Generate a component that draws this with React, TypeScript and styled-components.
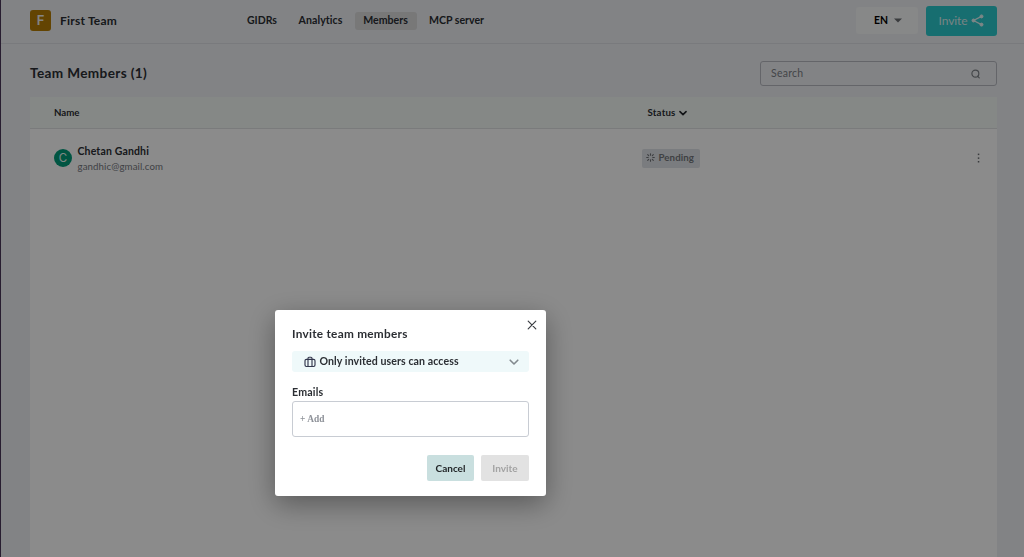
import React from "react";
import styled, { createGlobalStyle } from "styled-components";

const GlobalStyle = createGlobalStyle`
  * { box-sizing: border-box; }
  body { margin: 0; overflow: hidden; background: #edeff2; font-family: Lato, "Open Sans", sans-serif; color: #2b2e33; }
  button { font-family: inherit; border: 0; padding: 0; margin: 0; }
  svg { display: block; flex: none; }
`;

type TextProps = { $size?: number; $spacing?: number; $weight?: number; $color?: string };
const Text = styled.span<TextProps>`
  font-size: ${(p) => p.$size ?? 10.6}px;
  font-weight: ${(p) => p.$weight ?? 700};
  letter-spacing: ${(p) => p.$spacing ?? 0}px;
  color: ${(p) => p.$color ?? "inherit"};
  line-height: 15px;
  white-space: nowrap;
`;

const Page = styled.div`
  height: 557px;
  border-left: 1px solid #4a3558;
  display: flex;
  flex-direction: column;
`;
const Header = styled.header`
  height: 44px;
  flex: none;
  padding: 0 27px 2px 29px;
  border-bottom: 1px solid #dcdee3;
  display: flex;
  align-items: center;
`;
const Brand = styled.div`
  width: 208px;
  display: flex;
  align-items: center;
  gap: 9px;
`;
const Logo = styled.div`
  width: 21px;
  height: 21px;
  border-radius: 3px;
  background: #b57d04;
  color: #f0f0f0;
  font: 600 13px/21px Inter, sans-serif;
  text-align: center;
`;
const Nav = styled.nav`
  display: flex;
  align-items: center;
  gap: 3px;
`;
const NavItem = styled.div<{ $active?: boolean; $width: number }>`
  width: ${(p) => p.$width}px;
  height: 18px;
  border-radius: 3px;
  background: ${(p) => (p.$active ? "#dadadb" : "transparent")};
  padding: 0 1px 1px 0;
  display: flex;
  align-items: center;
  justify-content: center;
`;
const Actions = styled.div`
  margin-left: auto;
  display: flex;
  align-items: center;
  gap: 8px;
`;
const Language = styled.button`
  width: 62px;
  height: 27px;
  border-radius: 3px;
  background: #f6f7f8;
  padding-left: 2px;
  display: flex;
  align-items: center;
  justify-content: center;
  gap: 6px;
`;
const InviteButton = styled.button`
  width: 71px;
  height: 30px;
  border-radius: 3px;
  background: #2bc8cc;
  display: flex;
  align-items: center;
  justify-content: center;
  gap: 4px;
`;
const Main = styled.main`
  flex: 1;
  min-height: 0;
  padding: 17px 27px 0 29px;
  display: flex;
  flex-direction: column;
`;
const TitleRow = styled.div`
  height: 25px;
  display: flex;
  align-items: center;
  justify-content: space-between;
  margin-bottom: 11px;
`;
const Search = styled.div`
  width: 237px;
  height: 25px;
  border: 1px solid #b6b9c0;
  border-radius: 3px;
  padding: 0 15.5px 1px 10px;
  display: flex;
  align-items: center;
  justify-content: space-between;
  svg { margin-top: 1px; }
`;
const Table = styled.section`
  flex: 1;
  background: #fdfdfd;
`;
const TableHead = styled.div`
  height: 32px;
  background: #f3f8f5;
  border-bottom: 1px solid #dee1e2;
  padding-left: 24px;
  display: grid;
  grid-template-columns: 593.5px 1fr;
  align-items: center;
`;
const StatusHead = styled.div`
  display: flex;
  align-items: center;
  gap: 3px;
`;
const Row = styled.div`
  height: 58px;
  padding: 0 15px 0 24px;
  display: grid;
  grid-template-columns: 587.5px 1fr auto;
  align-items: center;
`;
const Person = styled.div`
  display: flex;
  align-items: center;
  gap: 5.5px;
`;
const Avatar = styled.div`
  width: 18px;
  height: 18px;
  border-radius: 50%;
  background: #009b79;
  color: #e8f6f1;
  font: 400 11.5px/18px Inter, sans-serif;
  text-align: center;
`;
const PersonText = styled.div`
  display: flex;
  flex-direction: column;
  padding-top: 1px;
  ${Text} + ${Text} { line-height: 14px; }
`;
const Pending = styled.div`
  width: 58.5px;
  height: 19px;
  border-radius: 2px;
  background: #dfe2e7;
  padding: 0 1px 1px 0;
  display: flex;
  align-items: center;
  justify-content: center;
  gap: 3px;
`;
const Overlay = styled.div`
  position: fixed;
  inset: 0;
  background: rgba(0, 0, 0, 0.45);
  padding: 310px 0 0 275px;
`;
const Dialog = styled.div`
  width: 271px;
  height: 186px;
  border-radius: 3px;
  background: #fff;
  box-shadow: 0 8px 28px rgba(0, 0, 0, 0.36);
  padding: 8px 17px 0;
  display: flex;
  flex-direction: column;
`;
const DialogHead = styled.div`
  height: 33px;
  margin-right: -8.5px;
  display: flex;
  align-items: flex-start;
  justify-content: space-between;
  padding-top: 1px;
  ${Text} { margin-top: 7px; }
`;
const AccessSelect = styled.div`
  height: 21px;
  flex: none;
  border-radius: 3px;
  background: #eff9fa;
  padding: 0 10px 0 12px;
  display: flex;
  align-items: center;
  gap: 3.5px;
  margin-bottom: 13px;
  ${Text} { margin-bottom: 1px; }
  svg:last-child { margin-left: auto; }
`;
const EmailBox = styled.div`
  height: 36px;
  flex: none;
  margin-top: 1px;
  border: 1px solid #c8ccd3;
  border-radius: 3px;
  padding: 0 7px;
  color: #8d9198;
  font: 700 9.4px/35px "Liberation Serif", serif;
`;
const Footer = styled.div`
  margin-top: 18px;
  display: flex;
  justify-content: flex-end;
  gap: 7px;
`;
const DialogButton = styled.button<{ $disabled?: boolean }>`
  width: ${(p) => (p.$disabled ? 48 : 47)}px;
  height: 26px;
  padding-bottom: 2px;
  border-radius: 2px;
  background: ${(p) => (p.$disabled ? "#e2e2e2" : "#c9dfdf")};
  color: ${(p) => (p.$disabled ? "#a3a3a3" : "#222628")};
`;

const Chevron = ({ color, width, size }: { color: string; width: number; size: number }) => (
  <svg width={size} height={size} viewBox="0 0 10 10" fill="none" stroke={color} strokeWidth={width} strokeLinecap="round" strokeLinejoin="round">
    <path d="M1.2 3.2 5 7l3.8-3.8" />
  </svg>
);

const ShareIcon = () => (
  <svg width="13" height="13" viewBox="0 0 13 13" fill="#e4f4f4" stroke="#e4f4f4">
    <path d="M10.5 2.4 2.5 6.5l8 4.1" fill="none" strokeWidth="1.2" />
    <circle cx="10.5" cy="2.4" r="1.5" />
    <circle cx="2.5" cy="6.5" r="1.5" />
    <circle cx="10.5" cy="10.6" r="1.5" />
  </svg>
);

const SearchIcon = () => (
  <svg width="10" height="10" viewBox="0 0 11 11" fill="none" stroke="#7c8086" strokeWidth="1.3" strokeLinecap="round">
    <circle cx="4.8" cy="5.1" r="3.8" />
    <path d="m7.1 7.8 2 1.9" />
  </svg>
);

const LoaderIcon = () => (
  <svg width="9" height="9" viewBox="0 0 9 9" stroke="#6e7176" strokeWidth="1.1" strokeLinecap="round">
    <path d="M4.5.7v1.5M4.5 6.8v1.5M.7 4.5h1.5M6.8 4.5h1.5M1.7 1.7l1 1M6.3 6.3l1 1M1.7 7.3l1-1M6.3 2.7l1-1" />
  </svg>
);

const CaseIcon = () => (
  <svg width="12" height="12" viewBox="0 0 12 12" fill="none" stroke="#34384e" strokeWidth="1.15" strokeLinejoin="round">
    <rect x="1" y="3.3" width="10" height="7.2" rx="1.4" />
    <path d="M4 10.5V2.2a1 1 0 0 1 1-1h2a1 1 0 0 1 1 1v8.3" />
  </svg>
);

export default function App() {
  return (
    <>
      <GlobalStyle />
      <Page>
        <Header>
          <Brand>
            <Logo>F</Logo>
            <Text $size={12} $spacing={0.22}>First Team</Text>
          </Brand>
          <Nav>
            <NavItem $width={49}><Text $size={10.5}>GIDRs</Text></NavItem>
            <NavItem $width={62}><Text $spacing={0.05}>Analytics</Text></NavItem>
            <NavItem $width={62} $active><Text>Members</Text></NavItem>
            <NavItem $width={74}><Text>MCP server</Text></NavItem>
          </Nav>
          <Actions>
            <Language>
              <Text $size={10.4}>EN</Text>
              <svg width="8" height="5" viewBox="0 0 8 5" fill="#6b6e72"><path d="M0 .5h8l-4 4z" /></svg>
            </Language>
            <InviteButton>
              <Text $size={12} $spacing={-0.1} $weight={400} $color="#dcefef">Invite</Text>
              <ShareIcon />
            </InviteButton>
          </Actions>
        </Header>
        <Main>
          <TitleRow>
            <Text $size={13.6} $spacing={0.37}>Team Members (1)</Text>
            <Search>
              <Text $size={10.5} $spacing={0.25} $weight={400} $color="#7b7e85">Search</Text>
              <SearchIcon />
            </Search>
          </TitleRow>
          <Table>
            <TableHead>
              <Text $size={9.7}>Name</Text>
              <StatusHead>
                <Text $size={9.7} $spacing={0.2}>Status</Text>
                <Chevron color="#22252a" width={2} size={8} />
              </StatusHead>
            </TableHead>
            <Row>
              <Person>
                <Avatar>C</Avatar>
                <PersonText>
                  <Text $size={10.5} $spacing={0.15}>Chetan Gandhi</Text>
                  <Text $size={9.7} $spacing={0.1} $weight={400} $color="#75787e">gandhic@gmail.com</Text>
                </PersonText>
              </Person>
              <Pending>
                <LoaderIcon />
                <Text $size={9.7} $spacing={0.1} $color="#74777c">Pending</Text>
              </Pending>
              <svg width="7" height="11" viewBox="0 0 7 11" fill="#696c70">
                <rect x="2.8" y="0.6" width="1.5" height="1.5" />
                <rect x="2.8" y="4.4" width="1.5" height="1.5" />
                <rect x="2.8" y="8" width="1.5" height="1.5" />
              </svg>
            </Row>
          </Table>
        </Main>
      </Page>
      <Overlay>
        <Dialog>
          <DialogHead>
            <Text $size={11.8} $spacing={0.26}>Invite team members</Text>
            <svg width="12" height="12" viewBox="0 0 12 12" stroke="#3a3d42" strokeWidth="1.2" strokeLinecap="round">
              <path d="m2.2 2.2 7.6 7.6M9.8 2.2 2.2 9.8" />
            </svg>
          </DialogHead>
          <AccessSelect>
            <CaseIcon />
            <Text $spacing={0.08}>Only invited users can access</Text>
            <Chevron color="#82898e" width={1.6} size={10} />
          </AccessSelect>
          <Text $spacing={0.2}>Emails</Text>
          <EmailBox>+ Add</EmailBox>
          <Footer>
            <DialogButton><Text $size={10}>Cancel</Text></DialogButton>
            <DialogButton $disabled><Text $size={10}>Invite</Text></DialogButton>
          </Footer>
        </Dialog>
      </Overlay>
    </>
  );
}
